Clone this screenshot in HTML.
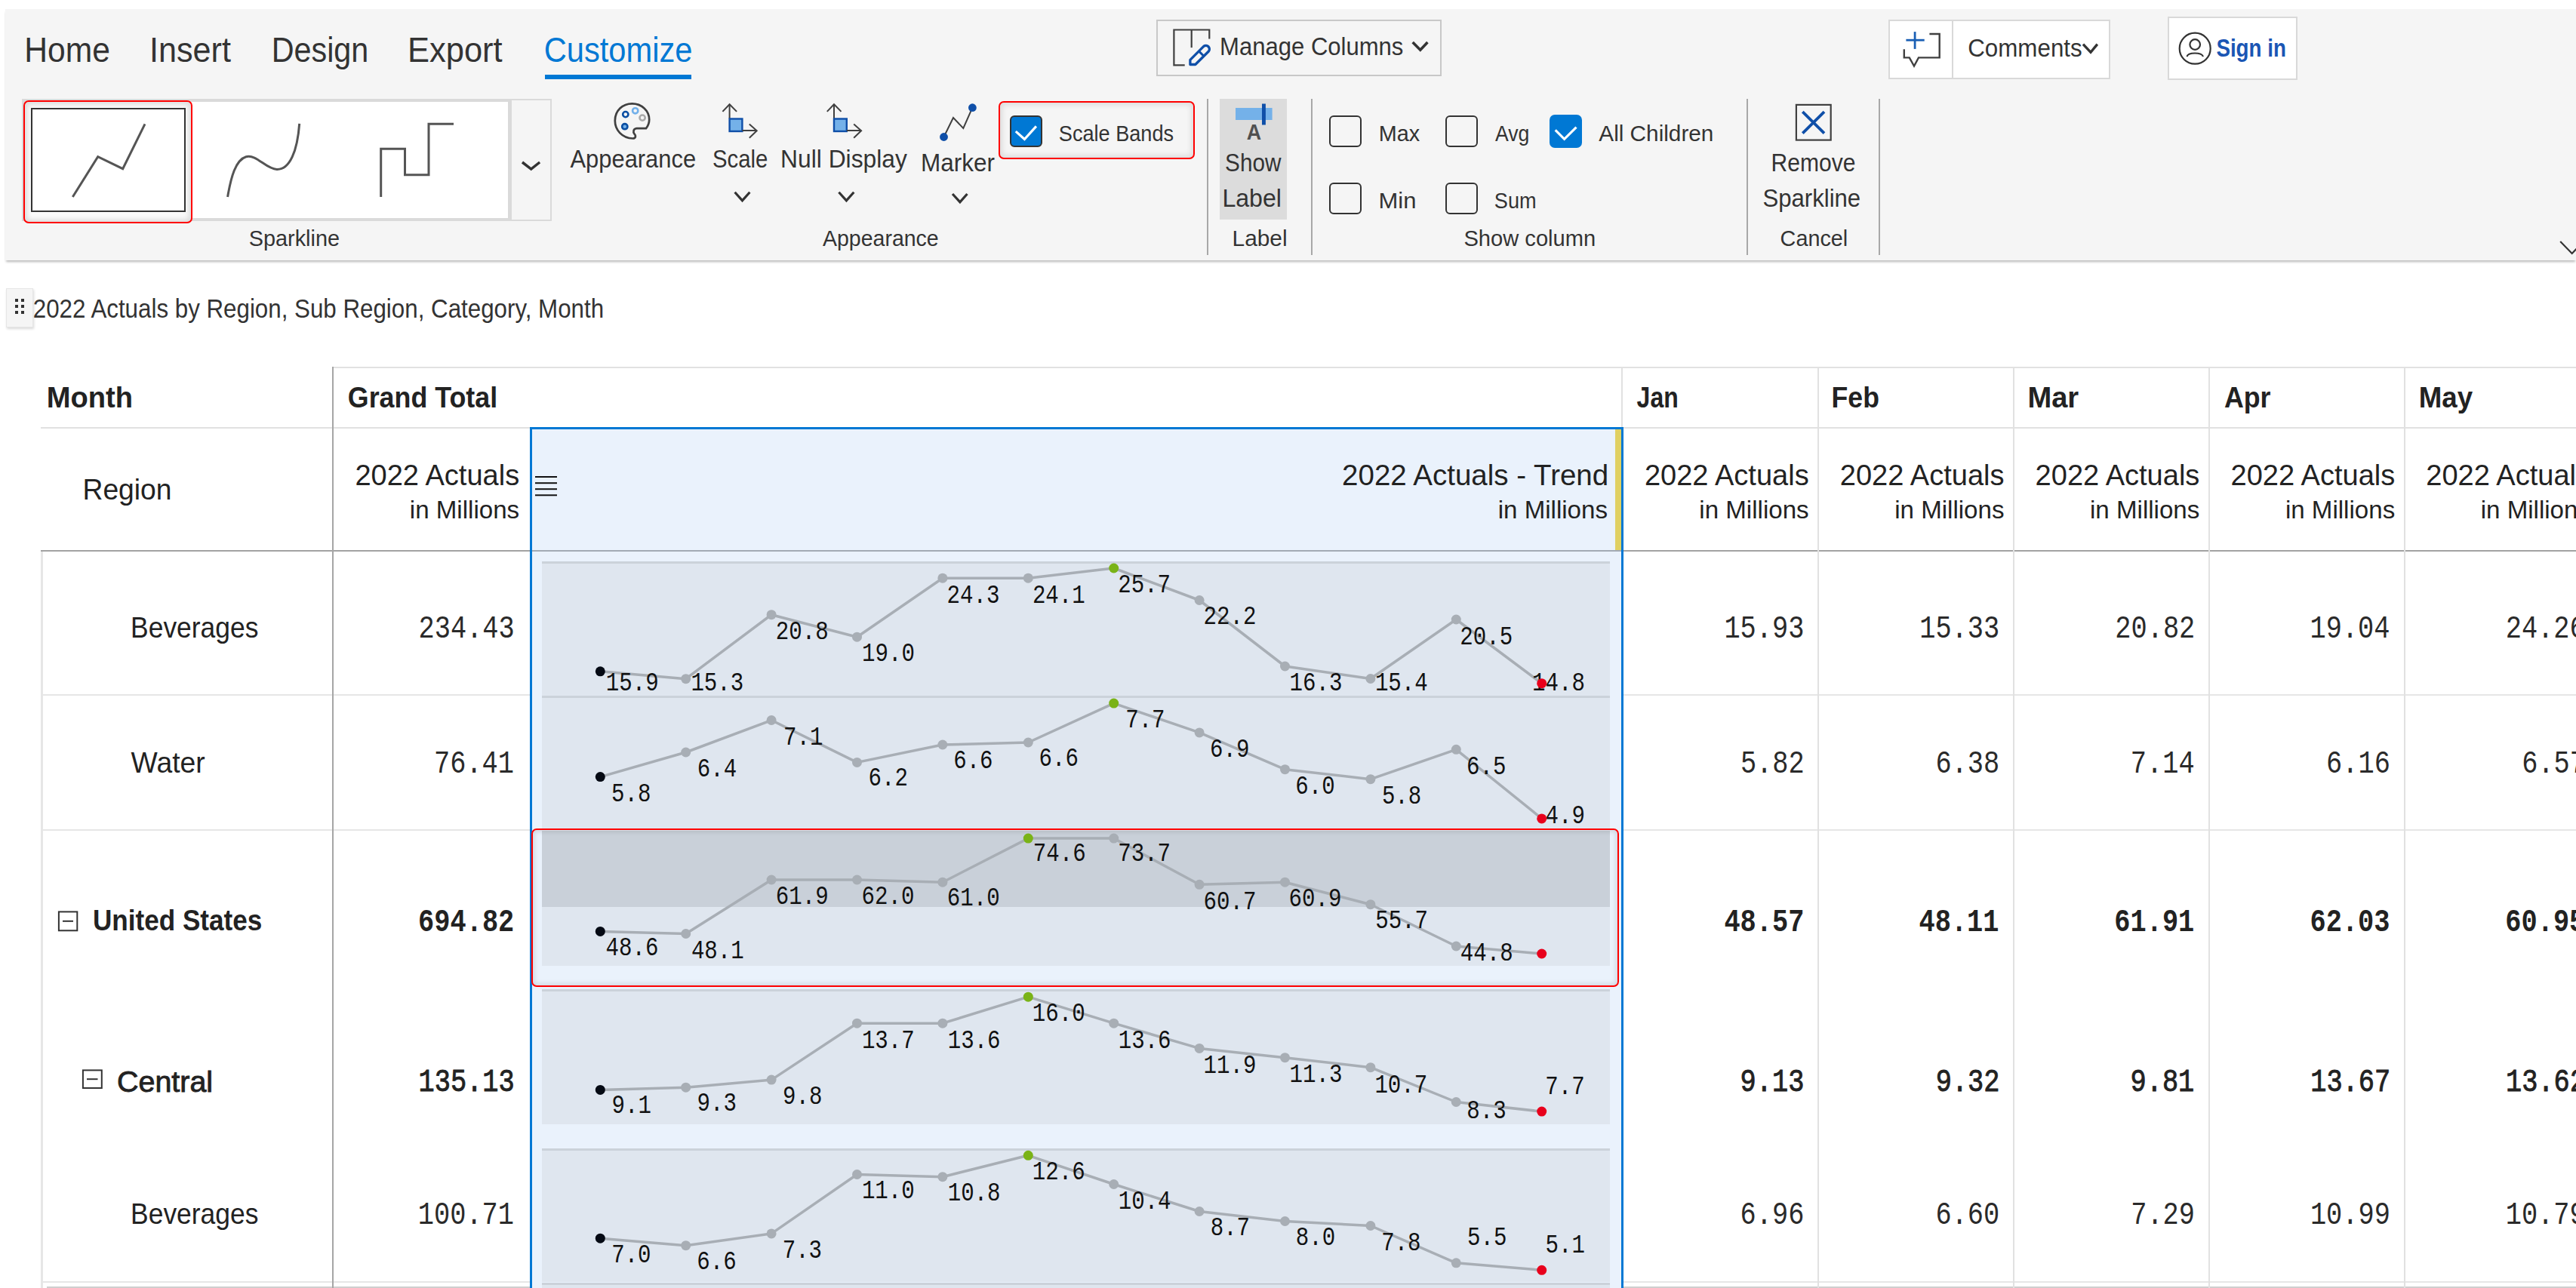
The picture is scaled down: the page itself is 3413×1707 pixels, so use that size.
<!DOCTYPE html>
<html><head><meta charset="utf-8">
<style>
html,body{margin:0;padding:0;background:#fff;width:3413px;height:1707px;overflow:hidden;position:relative;font-family:"Liberation Sans",sans-serif;}
.a{position:absolute;box-sizing:border-box;}
svg.ov{position:absolute;left:0;top:0;width:3413px;height:1707px;}
</style></head><body>
<!-- ribbon -->
<div class="a" style="left:7px;top:12px;width:3406px;height:333px;background:#f5f5f5;box-shadow:0 3px 3px -1px rgba(0,0,0,0.28);"></div>
<!-- customize underline -->
<div class="a" style="left:722px;top:99px;width:194px;height:6px;background:#0078d4;"></div>
<!-- manage columns box -->
<div class="a" style="left:1532px;top:26px;width:378px;height:75px;border:2px solid #c8c8c8;"></div>
<!-- comments box -->
<div class="a" style="left:2502px;top:26px;width:294px;height:79px;border:2px solid #d9d9d9;background:#fff;"></div>
<div class="a" style="left:2586px;top:26px;width:2px;height:79px;background:#d9d9d9;"></div>
<!-- sign in box -->
<div class="a" style="left:2872px;top:22px;width:172px;height:84px;border:2px solid #d9d9d9;background:#fff;"></div>
<!-- gallery -->
<div class="a" style="left:29px;top:131px;width:648px;height:162px;background:#dadada;"></div>
<div class="a" style="left:33px;top:135px;width:640px;height:154px;background:#fff;"></div>
<div class="a" style="left:676px;top:131px;width:55px;height:162px;background:#f5f5f5;border:2px solid #dadada;"></div>
<div class="a" style="left:31px;top:133px;width:224px;height:163px;border:2.5px solid #f00;border-radius:7px;box-shadow:inset 0 0 7px 3px rgba(0,0,0,0.13);background:#fafafa;"></div>
<div class="a" style="left:41px;top:143px;width:205px;height:138px;border:2.5px solid #333;background:#fff;"></div>
<!-- scale bands box -->
<div class="a" style="left:1323px;top:134px;width:260px;height:77px;border:2.5px solid #f00;border-radius:7px;box-shadow:inset 0 0 7px 3px rgba(0,0,0,0.10);"></div>
<div class="a" style="left:1338px;top:153px;width:43px;height:42px;border:2.5px solid #333;border-radius:6px;background:#0078d4;"></div>
<!-- show label bg -->
<div class="a" style="left:1616px;top:131px;width:89px;height:160px;background:#dcdcdc;"></div>
<!-- separators -->
<div class="a" style="left:1599px;top:131px;width:2px;height:207px;background:#a8a8a8;"></div>
<div class="a" style="left:1737px;top:131px;width:2px;height:207px;background:#a8a8a8;"></div>
<div class="a" style="left:2314px;top:131px;width:2px;height:207px;background:#a8a8a8;"></div>
<div class="a" style="left:2489px;top:131px;width:2px;height:207px;background:#a8a8a8;"></div>
<!-- checkboxes -->
<div class="a" style="left:1761px;top:153px;width:43px;height:42px;border:2.5px solid #333;border-radius:6px;"></div>
<div class="a" style="left:1915px;top:153px;width:43px;height:42px;border:2.5px solid #333;border-radius:6px;"></div>
<div class="a" style="left:2053px;top:152px;width:43px;height:44px;border-radius:7px;background:#0078d4;"></div>
<div class="a" style="left:1761px;top:242px;width:43px;height:42px;border:2.5px solid #333;border-radius:6px;"></div>
<div class="a" style="left:1915px;top:242px;width:43px;height:42px;border:2.5px solid #333;border-radius:6px;"></div>

<!-- drag handle -->
<div class="a" style="left:8px;top:382px;width:36px;height:52px;background:#f5f5f5;border:1px solid #e6e6e6;box-shadow:1px 2px 3px rgba(0,0,0,0.15);"></div>

<!-- table lines -->
<div class="a" style="left:440px;top:486px;width:2973px;height:2px;background:#e1e1e1;"></div>
<div class="a" style="left:54px;top:566px;width:3359px;height:2px;background:#e1e1e1;"></div>
<div class="a" style="left:54px;top:729px;width:3359px;height:2px;background:#a2a2a2;"></div>
<div class="a" style="left:54px;top:920px;width:3359px;height:2px;background:#e6e6e6;"></div>
<div class="a" style="left:54px;top:1099px;width:3359px;height:2px;background:#e6e6e6;"></div>
<div class="a" style="left:54px;top:1698px;width:3359px;height:2px;background:#e6e6e6;"></div>
<div class="a" style="left:62px;top:1705px;width:3351px;height:2px;background:#cfcfcf;"></div>
<div class="a" style="left:54px;top:731px;width:3px;height:976px;background:#e6e6e6;"></div>
<div class="a" style="left:440px;top:486px;width:2px;height:1221px;background:#a6a6a6;"></div>
<div class="a" style="left:2408px;top:486px;width:2px;height:1221px;background:#e1e1e1;"></div>
<div class="a" style="left:2667px;top:486px;width:2px;height:1221px;background:#e1e1e1;"></div>
<div class="a" style="left:2926px;top:486px;width:2px;height:1221px;background:#e1e1e1;"></div>
<div class="a" style="left:3185px;top:486px;width:2px;height:1221px;background:#e1e1e1;"></div>
<div class="a" style="left:2148px;top:486px;width:2px;height:81px;background:#e1e1e1;"></div>
<!-- trend column -->
<div class="a" style="left:702px;top:566px;width:1449px;height:1141px;background:#eaf2fc;border:3px solid #0078d4;border-bottom:none;"></div>
<div class="a" style="left:2140px;top:569px;width:8px;height:160px;background:#e0d062;"></div>
<div class="a" style="left:705px;top:729px;width:1443px;height:2px;background:#a2aab4;"></div>
<!-- bands -->
<div class="a" style="left:718px;top:744px;width:1415px;height:178px;background:#dfe6ef;border-top:3px solid #cbd2da;"></div>
<div class="a" style="left:718px;top:922px;width:1415px;height:177px;background:#dfe6ef;border-top:3px solid #cbd2da;"></div>
<div class="a" style="left:718px;top:1101px;width:1415px;height:179px;background:#dfe6ef;"></div>
<div class="a" style="left:718px;top:1101px;width:1415px;height:101px;background:#c9d0d9;"></div>
<div class="a" style="left:704px;top:1098px;width:1441px;height:210px;border:2.5px solid #f00;border-radius:7px;box-shadow:inset 0 0 6px 2px rgba(0,0,0,0.12);"></div>
<div class="a" style="left:718px;top:1311px;width:1415px;height:179px;background:#dfe6ef;border-top:3px solid #cbd2da;"></div>
<div class="a" style="left:718px;top:1522px;width:1415px;height:177px;background:#dfe6ef;border-top:3px solid #cbd2da;"></div>
<div class="a" style="left:718px;top:1700px;width:1415px;height:7px;background:#dfe6ef;border-top:3px solid #cbd2da;"></div>

<svg class="ov" width="3413" height="1707" viewBox="0 0 3413 1707">

<!-- gallery line icon -->
<polyline points="96.3,261 129.7,207.7 162.7,223.7 192,164.3" fill="none" stroke="#555" stroke-width="3"/>
<path d="M301.6,260.9 C306,235 312,212 326,207.7 C340,204 352,224 366.8,224.4 C384,225 394,200 396.7,163.8" fill="none" stroke="#555" stroke-width="3"/>
<polyline points="504.7,260.9 504.7,197.2 536.5,197.2 536.5,231.8 568,231.8 568,164.2 601,164.2" fill="none" stroke="#555" stroke-width="3"/>
<polyline points="692,215 703.7,224.1 715.1,215" fill="none" stroke="#333" stroke-width="3.5"/>
<!-- palette -->
<path d="M856,170.1 L843.5,170.1 C839,170.5 838.5,175 840.5,177.5 C843,180 842.5,183.5 838.5,183.5 C824,183 814.8,172 814.8,160 C814.8,146.5 825,137.3 837.5,137.3 C850,137.3 860.2,146.5 860.2,158.5 C860.2,163 858.5,167 856,170.1 Z" fill="none" stroke="#404040" stroke-width="2.7"/>
<circle cx="828.8" cy="151.6" r="3.6" fill="none" stroke="#0b4ea2" stroke-width="2.6"/>
<circle cx="841.7" cy="146.8" r="3.6" fill="none" stroke="#72b0ea" stroke-width="2.6"/>
<circle cx="851.1" cy="156.1" r="3.6" fill="none" stroke="#aaa" stroke-width="2.6"/>
<circle cx="827.8" cy="167.7" r="3.6" fill="#72b0ea" stroke="#0b4ea2" stroke-width="2.6"/>
<!-- scale icons -->
<g id="sc">
<polyline points="957.4,147.9 966.6,138.3 976.1,147.9" fill="none" stroke="#404040" stroke-width="2"/>
<line x1="966.6" y1="138.3" x2="966.6" y2="157" stroke="#404040" stroke-width="2"/>
<rect x="966.6" y="157.5" width="16.8" height="16.5" fill="#74b1e9" stroke="#0f4fa8" stroke-width="2.4"/>
<line x1="983.4" y1="173" x2="1002.7" y2="173" stroke="#404040" stroke-width="2"/>
<polyline points="992.8,164.5 1002.7,173.2 992.8,182.8" fill="none" stroke="#404040" stroke-width="2"/>
</g>
<use href="#sc" x="138.4" y="0"/>
<polyline points="973.6,254.8 983.5,265.9 993.4,254.8" fill="none" stroke="#333" stroke-width="3.2"/>
<polyline points="1111.4,254.8 1121.4,265.9 1131.3,254.8" fill="none" stroke="#333" stroke-width="3.2"/>
<polyline points="1262,257 1271.9,267.8 1281.5,257" fill="none" stroke="#333" stroke-width="3.2"/>
<!-- marker icon -->
<polyline points="1250.5,181.5 1263,156 1276.3,170 1288.4,142.7" fill="none" stroke="#404040" stroke-width="2"/>
<circle cx="1250.5" cy="181.5" r="5.4" fill="#0f4fa8"/>
<circle cx="1288.4" cy="142.7" r="5.4" fill="#0f4fa8"/>
<!-- scale bands check -->
<polyline points="1345.8,174.1 1357.4,184.5 1372.9,167.4" fill="none" stroke="#fff" stroke-width="3.2"/>
<polyline points="2060.7,172.4 2072.6,184.3 2088.5,168.7" fill="none" stroke="#fff" stroke-width="3.2"/>
<!-- show label icon -->
<rect x="1637" y="143" width="48.6" height="16" fill="#74b1e9"/>
<rect x="1672" y="137.5" width="4.9" height="28" fill="#0f4fa8"/>
<!-- remove icon -->
<rect x="2379.9" y="138.9" width="45.8" height="46.7" fill="none" stroke="#404040" stroke-width="2.2"/>
<line x1="2388.3" y1="148.2" x2="2417" y2="176.7" stroke="#0f4fa8" stroke-width="3.8"/>
<line x1="2417" y1="148.2" x2="2388.3" y2="176.7" stroke="#0f4fa8" stroke-width="3.8"/>
<!-- ribbon collapse chevron -->
<polyline points="3392.2,320 3407.7,336 3423,320" fill="none" stroke="#333" stroke-width="2.2"/>
<!-- manage columns icon -->
<polyline points="1602.3,51.5 1602.3,39.5 1555.4,39.5 1555.4,86.4 1569.7,86.4" fill="none" stroke="#404040" stroke-width="2.2"/>
<line x1="1578.7" y1="39.5" x2="1578.7" y2="63.1" stroke="#404040" stroke-width="2.2"/>
<path d="M1576.9,85.5 L1576.9,79.3 L1594.8,61.4 A4.7,4.7 0 0 1 1601.4,68 L1583.8,85.5 Z" fill="#f5f5f5" stroke="#0f4fa8" stroke-width="3.3" stroke-linejoin="round"/>
<line x1="1588.2" y1="67.6" x2="1594.4" y2="73.8" stroke="#0f4fa8" stroke-width="3"/>
<polyline points="1871.7,56.1 1881.8,66.2 1891.4,56.1" fill="none" stroke="#333" stroke-width="3.6"/>
<!-- comments icon -->
<line x1="2525.4" y1="53.2" x2="2549.7" y2="53.2" stroke="#1a5fb4" stroke-width="2.8"/>
<line x1="2537.1" y1="42.1" x2="2537.1" y2="64.9" stroke="#1a5fb4" stroke-width="2.8"/>
<polyline points="2556.4,45 2569.7,45 2569.7,76.4 2542,76.4 2536,87.5 2529.8,76.4 2522.8,76.4 2522.8,65.3" fill="none" stroke="#404040" stroke-width="2.4"/>
<polyline points="2760,58.7 2770,69.3 2778.8,58.7" fill="none" stroke="#333" stroke-width="3.4"/>
<!-- sign in icon -->
<circle cx="2908.2" cy="64.2" r="20.5" fill="none" stroke="#333" stroke-width="2.2"/>
<circle cx="2908.2" cy="59" r="6.8" fill="none" stroke="#333" stroke-width="2.2"/>
<path d="M2897.5,75 C2899,69 2917,69 2919,75" fill="none" stroke="#333" stroke-width="2.2"/>
<!-- drag handle dots -->
<g fill="#333">
<rect x="20" y="396" width="4" height="4"/><rect x="28" y="396" width="4" height="4"/>
<rect x="20" y="404" width="4" height="4"/><rect x="28" y="404" width="4" height="4"/>
<rect x="20" y="412" width="4" height="4"/><rect x="28" y="412" width="4" height="4"/>
</g>
<!-- hamburger -->
<g stroke="#111" stroke-width="2">
<line x1="709" y1="632" x2="738" y2="632"/><line x1="709" y1="640.2" x2="738" y2="640.2"/>
<line x1="709" y1="648.2" x2="738" y2="648.2"/><line x1="709" y1="656.3" x2="738" y2="656.3"/>
</g>
<!-- minus boxes -->
<rect x="77.9" y="1208.4" width="24.4" height="24.9" fill="none" stroke="#333" stroke-width="2"/>
<line x1="83" y1="1220.8" x2="97" y2="1220.8" stroke="#333" stroke-width="2"/>
<rect x="109.9" y="1418.4" width="24.9" height="23.6" fill="none" stroke="#333" stroke-width="2"/>
<line x1="115" y1="1430.2" x2="129.5" y2="1430.2" stroke="#333" stroke-width="2"/>

<polyline points="795.3,889.8 908.7,899.7 1022.1,814.7 1135.5,844.2 1248.9,766.2 1362.3,766.2 1475.7,753.0 1589.1,795.5 1702.5,883.0 1815.9,899.5 1929.3,821.0 2042.7,905.7" fill="none" stroke="#a8aeb5" stroke-width="3.5" stroke-linejoin="round"/>
<polyline points="795.3,1029.6 908.7,997.0 1022.1,954.5 1135.5,1010.4 1248.9,987.0 1362.3,984.0 1475.7,932.1 1589.1,970.9 1702.5,1019.7 1815.9,1032.7 1929.3,993.3 2042.7,1084.9" fill="none" stroke="#a8aeb5" stroke-width="3.5" stroke-linejoin="round"/>
<polyline points="795.3,1234.4 908.7,1237.5 1022.1,1166.0 1135.5,1166.0 1248.9,1169.2 1362.3,1111.1 1475.7,1111.1 1589.1,1172.3 1702.5,1169.2 1815.9,1198.7 1929.3,1254.0 2042.7,1264.0" fill="none" stroke="#a8aeb5" stroke-width="3.5" stroke-linejoin="round"/>
<polyline points="795.3,1444.4 908.7,1441.2 1022.1,1431.1 1135.5,1356.2 1248.9,1356.2 1362.3,1321.2 1475.7,1356.2 1589.1,1389.4 1702.5,1401.7 1815.9,1414.7 1929.3,1460.5 2042.7,1473.1" fill="none" stroke="#a8aeb5" stroke-width="3.5" stroke-linejoin="round"/>
<polyline points="795.3,1641.2 908.7,1650.7 1022.1,1634.9 1135.5,1556.5 1248.9,1559.7 1362.3,1531.3 1475.7,1569.5 1589.1,1605.5 1702.5,1618.5 1815.9,1624.5 1929.3,1673.8 2042.7,1683.3" fill="none" stroke="#a8aeb5" stroke-width="3.5" stroke-linejoin="round"/>
<text x="32.3" y="82.3" font-family="Liberation Sans" font-size="46.51" fill="#333" textLength="113.6" lengthAdjust="spacingAndGlyphs">Home</text>
<text x="198.0" y="82.3" font-family="Liberation Sans" font-size="46.51" fill="#333" textLength="107.9" lengthAdjust="spacingAndGlyphs">Insert</text>
<text x="359.7" y="82.3" font-family="Liberation Sans" font-size="46.51" fill="#333" textLength="128.6" lengthAdjust="spacingAndGlyphs">Design</text>
<text x="540.0" y="82.3" font-family="Liberation Sans" font-size="46.51" fill="#333" textLength="125.7" lengthAdjust="spacingAndGlyphs">Export</text>
<text x="720.7" y="82.3" font-family="Liberation Sans" font-size="46.51" fill="#0078d4" textLength="196.8" lengthAdjust="spacingAndGlyphs">Customize</text>
<text x="1616.1" y="73.0" font-family="Liberation Sans" font-size="32.41" fill="#333" textLength="243.3" lengthAdjust="spacingAndGlyphs">Manage Columns</text>
<text x="2607.2" y="74.6" font-family="Liberation Sans" font-size="32.41" fill="#333" textLength="151.5" lengthAdjust="spacingAndGlyphs">Comments</text>
<text x="2936.4" y="75.3" font-family="Liberation Sans" font-size="32.41" font-weight="700" fill="#1a56b4" textLength="92.5" lengthAdjust="spacingAndGlyphs">Sign in</text>
<text x="755.5" y="222.0" font-family="Liberation Sans" font-size="32.41" fill="#333" textLength="166.6" lengthAdjust="spacingAndGlyphs">Appearance</text>
<text x="944.0" y="221.6" font-family="Liberation Sans" font-size="32.41" fill="#333" textLength="73.4" lengthAdjust="spacingAndGlyphs">Scale</text>
<text x="1034.1" y="221.6" font-family="Liberation Sans" font-size="32.41" fill="#333" textLength="167.7" lengthAdjust="spacingAndGlyphs">Null Display</text>
<text x="1220.0" y="226.5" font-family="Liberation Sans" font-size="32.41" fill="#333" textLength="98.0" lengthAdjust="spacingAndGlyphs">Marker</text>
<text x="1402.8" y="187.0" font-family="Liberation Sans" font-size="28.78" fill="#333" textLength="152.3" lengthAdjust="spacingAndGlyphs">Scale Bands</text>
<text x="1623.1" y="226.5" font-family="Liberation Sans" font-size="32.41" fill="#333" textLength="74.3" lengthAdjust="spacingAndGlyphs">Show</text>
<text x="1619.4" y="274.0" font-family="Liberation Sans" font-size="32.41" fill="#333" textLength="78.6" lengthAdjust="spacingAndGlyphs">Label</text>
<text x="1826.7" y="187.3" font-family="Liberation Sans" font-size="28.78" fill="#333" textLength="54.4" lengthAdjust="spacingAndGlyphs">Max</text>
<text x="1980.9" y="187.3" font-family="Liberation Sans" font-size="28.78" fill="#333" textLength="45.4" lengthAdjust="spacingAndGlyphs">Avg</text>
<text x="2118.3" y="187.3" font-family="Liberation Sans" font-size="28.78" fill="#333" textLength="152.1" lengthAdjust="spacingAndGlyphs">All Children</text>
<text x="1826.5" y="276.1" font-family="Liberation Sans" font-size="28.78" fill="#333" textLength="50.0" lengthAdjust="spacingAndGlyphs">Min</text>
<text x="1979.8" y="276.1" font-family="Liberation Sans" font-size="28.78" fill="#333" textLength="55.8" lengthAdjust="spacingAndGlyphs">Sum</text>
<text x="2346.6" y="226.7" font-family="Liberation Sans" font-size="32.41" fill="#333" textLength="112.0" lengthAdjust="spacingAndGlyphs">Remove</text>
<text x="2335.4" y="273.8" font-family="Liberation Sans" font-size="32.41" fill="#333" textLength="129.8" lengthAdjust="spacingAndGlyphs">Sparkline</text>
<text x="329.8" y="326.0" font-family="Liberation Sans" font-size="29.36" fill="#333" textLength="120.2" lengthAdjust="spacingAndGlyphs">Sparkline</text>
<text x="1090.0" y="326.0" font-family="Liberation Sans" font-size="29.36" fill="#333" textLength="153.7" lengthAdjust="spacingAndGlyphs">Appearance</text>
<text x="1632.6" y="326.0" font-family="Liberation Sans" font-size="29.36" fill="#333" textLength="73.0" lengthAdjust="spacingAndGlyphs">Label</text>
<text x="1939.4" y="326.0" font-family="Liberation Sans" font-size="29.36" fill="#333" textLength="174.8" lengthAdjust="spacingAndGlyphs">Show column</text>
<text x="2358.6" y="326.0" font-family="Liberation Sans" font-size="29.36" fill="#333" textLength="89.6" lengthAdjust="spacingAndGlyphs">Cancel</text>
<text x="1651.7" y="184.5" font-family="Liberation Sans" font-size="30.09" font-weight="700" fill="#505050" textLength="19.4" lengthAdjust="spacingAndGlyphs">A</text>
<text x="43.8" y="421.4" font-family="Liberation Sans" font-size="34.59" fill="#333" textLength="756.3" lengthAdjust="spacingAndGlyphs">2022 Actuals by Region, Sub Region, Category, Month</text>
<text x="61.7" y="540.2" font-family="Liberation Sans" font-size="39.68" font-weight="700" fill="#222" textLength="114.3" lengthAdjust="spacingAndGlyphs">Month</text>
<text x="460.8" y="540.2" font-family="Liberation Sans" font-size="39.68" font-weight="700" fill="#222" textLength="198.3" lengthAdjust="spacingAndGlyphs">Grand Total</text>
<text x="2168.6" y="540.2" font-family="Liberation Sans" font-size="39.68" font-weight="700" fill="#222" textLength="55.1" lengthAdjust="spacingAndGlyphs">Jan</text>
<text x="2426.6" y="540.2" font-family="Liberation Sans" font-size="39.68" font-weight="700" fill="#222" textLength="63.3" lengthAdjust="spacingAndGlyphs">Feb</text>
<text x="2686.4" y="540.2" font-family="Liberation Sans" font-size="39.68" font-weight="700" fill="#222" textLength="67.8" lengthAdjust="spacingAndGlyphs">Mar</text>
<text x="2946.9" y="540.2" font-family="Liberation Sans" font-size="39.68" font-weight="700" fill="#222" textLength="61.6" lengthAdjust="spacingAndGlyphs">Apr</text>
<text x="3204.8" y="540.2" font-family="Liberation Sans" font-size="39.68" font-weight="700" fill="#222" textLength="71.4" lengthAdjust="spacingAndGlyphs">May</text>
<text x="109.5" y="661.5" font-family="Liberation Sans" font-size="39.24" fill="#222" textLength="118.0" lengthAdjust="spacingAndGlyphs">Region</text>
<text x="470.4" y="643.2" font-family="Liberation Sans" font-size="39.24" fill="#222" textLength="217.8" lengthAdjust="spacingAndGlyphs">2022 Actuals</text>
<text x="542.8" y="687.0" font-family="Liberation Sans" font-size="33.28" fill="#222" textLength="145.3" lengthAdjust="spacingAndGlyphs">in Millions</text>
<text x="1778.1" y="643.2" font-family="Liberation Sans" font-size="39.24" fill="#222" textLength="353.1" lengthAdjust="spacingAndGlyphs">2022 Actuals - Trend</text>
<text x="1984.7" y="687.0" font-family="Liberation Sans" font-size="33.28" fill="#222" textLength="145.3" lengthAdjust="spacingAndGlyphs">in Millions</text>
<text x="2178.9" y="643.2" font-family="Liberation Sans" font-size="39.24" fill="#222" textLength="217.8" lengthAdjust="spacingAndGlyphs">2022 Actuals</text>
<text x="2251.3" y="687.0" font-family="Liberation Sans" font-size="33.28" fill="#222" textLength="145.3" lengthAdjust="spacingAndGlyphs">in Millions</text>
<text x="2437.8" y="643.2" font-family="Liberation Sans" font-size="39.24" fill="#222" textLength="217.8" lengthAdjust="spacingAndGlyphs">2022 Actuals</text>
<text x="2510.2" y="687.0" font-family="Liberation Sans" font-size="33.28" fill="#222" textLength="145.3" lengthAdjust="spacingAndGlyphs">in Millions</text>
<text x="2696.6" y="643.2" font-family="Liberation Sans" font-size="39.24" fill="#222" textLength="217.8" lengthAdjust="spacingAndGlyphs">2022 Actuals</text>
<text x="2769.0" y="687.0" font-family="Liberation Sans" font-size="33.28" fill="#222" textLength="145.3" lengthAdjust="spacingAndGlyphs">in Millions</text>
<text x="2955.5" y="643.2" font-family="Liberation Sans" font-size="39.24" fill="#222" textLength="217.8" lengthAdjust="spacingAndGlyphs">2022 Actuals</text>
<text x="3027.9" y="687.0" font-family="Liberation Sans" font-size="33.28" fill="#222" textLength="145.3" lengthAdjust="spacingAndGlyphs">in Millions</text>
<text x="3214.3" y="643.2" font-family="Liberation Sans" font-size="39.24" fill="#222" textLength="217.8" lengthAdjust="spacingAndGlyphs">2022 Actuals</text>
<text x="3286.7" y="687.0" font-family="Liberation Sans" font-size="33.28" fill="#222" textLength="145.3" lengthAdjust="spacingAndGlyphs">in Millions</text>
<text x="173.1" y="845.0" font-family="Liberation Sans" font-size="39.24" fill="#222" textLength="169.3" lengthAdjust="spacingAndGlyphs">Beverages</text>
<text x="173.6" y="1024.0" font-family="Liberation Sans" font-size="39.24" fill="#222" textLength="98.1" lengthAdjust="spacingAndGlyphs">Water</text>
<text x="123.0" y="1233.0" font-family="Liberation Sans" font-size="39.24" font-weight="700" fill="#222" textLength="224.2" lengthAdjust="spacingAndGlyphs">United States</text>
<text x="155.1" y="1446.5" font-family="Liberation Sans" font-size="39.24" stroke="#222" stroke-width="0.9" fill="#222" textLength="127.0" lengthAdjust="spacingAndGlyphs">Central</text>
<text x="173.1" y="1622.4" font-family="Liberation Sans" font-size="39.24" fill="#222" textLength="169.3" lengthAdjust="spacingAndGlyphs">Beverages</text>
<text x="554.5" y="845.0" font-family="Liberation Mono" font-size="41.58" fill="#2a2a2a" textLength="127.2" lengthAdjust="spacingAndGlyphs">234.43</text>
<text x="2284.4" y="845.0" font-family="Liberation Mono" font-size="41.58" fill="#2a2a2a" textLength="106.0" lengthAdjust="spacingAndGlyphs">15.93</text>
<text x="2543.2" y="845.0" font-family="Liberation Mono" font-size="41.58" fill="#2a2a2a" textLength="106.0" lengthAdjust="spacingAndGlyphs">15.33</text>
<text x="2802.3" y="845.0" font-family="Liberation Mono" font-size="41.58" fill="#2a2a2a" textLength="106.0" lengthAdjust="spacingAndGlyphs">20.82</text>
<text x="3060.5" y="845.0" font-family="Liberation Mono" font-size="41.58" fill="#2a2a2a" textLength="106.0" lengthAdjust="spacingAndGlyphs">19.04</text>
<text x="3319.7" y="845.0" font-family="Liberation Mono" font-size="41.58" fill="#2a2a2a" textLength="106.0" lengthAdjust="spacingAndGlyphs">24.26</text>
<text x="575.0" y="1024.0" font-family="Liberation Mono" font-size="41.58" fill="#2a2a2a" textLength="106.0" lengthAdjust="spacingAndGlyphs">76.41</text>
<text x="2305.9" y="1024.0" font-family="Liberation Mono" font-size="41.58" fill="#2a2a2a" textLength="84.8" lengthAdjust="spacingAndGlyphs">5.82</text>
<text x="2564.4" y="1024.0" font-family="Liberation Mono" font-size="41.58" fill="#2a2a2a" textLength="84.8" lengthAdjust="spacingAndGlyphs">6.38</text>
<text x="2822.8" y="1024.0" font-family="Liberation Mono" font-size="41.58" fill="#2a2a2a" textLength="84.8" lengthAdjust="spacingAndGlyphs">7.14</text>
<text x="3082.1" y="1024.0" font-family="Liberation Mono" font-size="41.58" fill="#2a2a2a" textLength="84.8" lengthAdjust="spacingAndGlyphs">6.16</text>
<text x="3341.2" y="1024.0" font-family="Liberation Mono" font-size="41.58" fill="#2a2a2a" textLength="84.8" lengthAdjust="spacingAndGlyphs">6.57</text>
<text x="554.1" y="1233.5" font-family="Liberation Mono" font-size="41.58" font-weight="700" fill="#222" textLength="127.2" lengthAdjust="spacingAndGlyphs">694.82</text>
<text x="2284.4" y="1233.5" font-family="Liberation Mono" font-size="41.58" font-weight="700" fill="#222" textLength="106.0" lengthAdjust="spacingAndGlyphs">48.57</text>
<text x="2542.5" y="1233.5" font-family="Liberation Mono" font-size="41.58" font-weight="700" fill="#222" textLength="106.0" lengthAdjust="spacingAndGlyphs">48.11</text>
<text x="2801.3" y="1233.5" font-family="Liberation Mono" font-size="41.58" font-weight="700" fill="#222" textLength="106.0" lengthAdjust="spacingAndGlyphs">61.91</text>
<text x="3060.5" y="1233.5" font-family="Liberation Mono" font-size="41.58" font-weight="700" fill="#222" textLength="106.0" lengthAdjust="spacingAndGlyphs">62.03</text>
<text x="3319.3" y="1233.5" font-family="Liberation Mono" font-size="41.58" font-weight="700" fill="#222" textLength="106.0" lengthAdjust="spacingAndGlyphs">60.95</text>
<text x="554.5" y="1446.0" font-family="Liberation Mono" font-size="41.58" stroke="#222" stroke-width="0.9" fill="#222" textLength="127.2" lengthAdjust="spacingAndGlyphs">135.13</text>
<text x="2305.6" y="1446.0" font-family="Liberation Mono" font-size="41.58" stroke="#222" stroke-width="0.9" fill="#222" textLength="84.8" lengthAdjust="spacingAndGlyphs">9.13</text>
<text x="2564.7" y="1446.0" font-family="Liberation Mono" font-size="41.58" stroke="#222" stroke-width="0.9" fill="#222" textLength="84.8" lengthAdjust="spacingAndGlyphs">9.32</text>
<text x="2822.5" y="1446.0" font-family="Liberation Mono" font-size="41.58" stroke="#222" stroke-width="0.9" fill="#222" textLength="84.8" lengthAdjust="spacingAndGlyphs">9.81</text>
<text x="3061.2" y="1446.0" font-family="Liberation Mono" font-size="41.58" stroke="#222" stroke-width="0.9" fill="#222" textLength="106.0" lengthAdjust="spacingAndGlyphs">13.67</text>
<text x="3320.0" y="1446.0" font-family="Liberation Mono" font-size="41.58" stroke="#222" stroke-width="0.9" fill="#222" textLength="106.0" lengthAdjust="spacingAndGlyphs">13.62</text>
<text x="553.8" y="1622.0" font-family="Liberation Mono" font-size="41.58" fill="#2a2a2a" textLength="127.2" lengthAdjust="spacingAndGlyphs">100.71</text>
<text x="2305.6" y="1622.0" font-family="Liberation Mono" font-size="41.58" fill="#2a2a2a" textLength="84.8" lengthAdjust="spacingAndGlyphs">6.96</text>
<text x="2564.4" y="1622.0" font-family="Liberation Mono" font-size="41.58" fill="#2a2a2a" textLength="84.8" lengthAdjust="spacingAndGlyphs">6.60</text>
<text x="2823.2" y="1622.0" font-family="Liberation Mono" font-size="41.58" fill="#2a2a2a" textLength="84.8" lengthAdjust="spacingAndGlyphs">7.29</text>
<text x="3060.9" y="1622.0" font-family="Liberation Mono" font-size="41.58" fill="#2a2a2a" textLength="106.0" lengthAdjust="spacingAndGlyphs">10.99</text>
<text x="3319.7" y="1622.0" font-family="Liberation Mono" font-size="41.58" fill="#2a2a2a" textLength="106.0" lengthAdjust="spacingAndGlyphs">10.79</text>
<text x="802.8" y="915.0" font-family="Liberation Mono" font-size="34.45" fill="#111" textLength="69.9" lengthAdjust="spacingAndGlyphs">15.9</text>
<text x="915.4" y="915.0" font-family="Liberation Mono" font-size="34.45" fill="#111" textLength="69.9" lengthAdjust="spacingAndGlyphs">15.3</text>
<text x="1027.8" y="847.3" font-family="Liberation Mono" font-size="34.45" fill="#111" textLength="69.9" lengthAdjust="spacingAndGlyphs">20.8</text>
<text x="1142.0" y="876.2" font-family="Liberation Mono" font-size="34.45" fill="#111" textLength="69.9" lengthAdjust="spacingAndGlyphs">19.0</text>
<text x="1254.5" y="798.6" font-family="Liberation Mono" font-size="34.45" fill="#111" textLength="69.9" lengthAdjust="spacingAndGlyphs">24.3</text>
<text x="1367.9" y="798.6" font-family="Liberation Mono" font-size="34.45" fill="#111" textLength="69.9" lengthAdjust="spacingAndGlyphs">24.1</text>
<text x="1481.2" y="785.2" font-family="Liberation Mono" font-size="34.45" fill="#111" textLength="69.9" lengthAdjust="spacingAndGlyphs">25.7</text>
<text x="1594.6" y="827.1" font-family="Liberation Mono" font-size="34.45" fill="#111" textLength="69.9" lengthAdjust="spacingAndGlyphs">22.2</text>
<text x="1708.6" y="915.0" font-family="Liberation Mono" font-size="34.45" fill="#111" textLength="69.9" lengthAdjust="spacingAndGlyphs">16.3</text>
<text x="1821.9" y="915.0" font-family="Liberation Mono" font-size="34.45" fill="#111" textLength="69.9" lengthAdjust="spacingAndGlyphs">15.4</text>
<text x="1934.3" y="854.2" font-family="Liberation Mono" font-size="34.45" fill="#111" textLength="69.9" lengthAdjust="spacingAndGlyphs">20.5</text>
<text x="2030.0" y="915.0" font-family="Liberation Mono" font-size="34.45" fill="#111" textLength="69.9" lengthAdjust="spacingAndGlyphs">14.8</text>
<text x="810.1" y="1061.6" font-family="Liberation Mono" font-size="34.45" fill="#111" textLength="52.4" lengthAdjust="spacingAndGlyphs">5.8</text>
<text x="923.8" y="1029.0" font-family="Liberation Mono" font-size="34.45" fill="#111" textLength="52.4" lengthAdjust="spacingAndGlyphs">6.4</text>
<text x="1038.0" y="986.5" font-family="Liberation Mono" font-size="34.45" fill="#111" textLength="52.4" lengthAdjust="spacingAndGlyphs">7.1</text>
<text x="1150.5" y="1041.4" font-family="Liberation Mono" font-size="34.45" fill="#111" textLength="52.4" lengthAdjust="spacingAndGlyphs">6.2</text>
<text x="1263.2" y="1018.0" font-family="Liberation Mono" font-size="34.45" fill="#111" textLength="52.4" lengthAdjust="spacingAndGlyphs">6.6</text>
<text x="1376.6" y="1015.0" font-family="Liberation Mono" font-size="34.45" fill="#111" textLength="52.4" lengthAdjust="spacingAndGlyphs">6.6</text>
<text x="1491.2" y="963.8" font-family="Liberation Mono" font-size="34.45" fill="#111" textLength="52.4" lengthAdjust="spacingAndGlyphs">7.7</text>
<text x="1603.0" y="1002.6" font-family="Liberation Mono" font-size="34.45" fill="#111" textLength="52.4" lengthAdjust="spacingAndGlyphs">6.9</text>
<text x="1716.3" y="1052.3" font-family="Liberation Mono" font-size="34.45" fill="#111" textLength="52.4" lengthAdjust="spacingAndGlyphs">6.0</text>
<text x="1830.9" y="1064.7" font-family="Liberation Mono" font-size="34.45" fill="#111" textLength="52.4" lengthAdjust="spacingAndGlyphs">5.8</text>
<text x="1943.0" y="1025.9" font-family="Liberation Mono" font-size="34.45" fill="#111" textLength="52.4" lengthAdjust="spacingAndGlyphs">6.5</text>
<text x="2047.5" y="1091.0" font-family="Liberation Mono" font-size="34.45" fill="#111" textLength="52.4" lengthAdjust="spacingAndGlyphs">4.9</text>
<text x="802.5" y="1266.4" font-family="Liberation Mono" font-size="34.45" fill="#111" textLength="69.9" lengthAdjust="spacingAndGlyphs">48.6</text>
<text x="915.9" y="1269.5" font-family="Liberation Mono" font-size="34.45" fill="#111" textLength="69.9" lengthAdjust="spacingAndGlyphs">48.1</text>
<text x="1027.8" y="1198.0" font-family="Liberation Mono" font-size="34.45" fill="#111" textLength="69.9" lengthAdjust="spacingAndGlyphs">61.9</text>
<text x="1141.5" y="1198.0" font-family="Liberation Mono" font-size="34.45" fill="#111" textLength="69.9" lengthAdjust="spacingAndGlyphs">62.0</text>
<text x="1254.8" y="1200.2" font-family="Liberation Mono" font-size="34.45" fill="#111" textLength="69.9" lengthAdjust="spacingAndGlyphs">61.0</text>
<text x="1368.8" y="1141.2" font-family="Liberation Mono" font-size="34.45" fill="#111" textLength="69.9" lengthAdjust="spacingAndGlyphs">74.6</text>
<text x="1481.2" y="1141.2" font-family="Liberation Mono" font-size="34.45" fill="#111" textLength="69.9" lengthAdjust="spacingAndGlyphs">73.7</text>
<text x="1594.6" y="1204.9" font-family="Liberation Mono" font-size="34.45" fill="#111" textLength="69.9" lengthAdjust="spacingAndGlyphs">60.7</text>
<text x="1707.6" y="1201.2" font-family="Liberation Mono" font-size="34.45" fill="#111" textLength="69.9" lengthAdjust="spacingAndGlyphs">60.9</text>
<text x="1822.2" y="1229.8" font-family="Liberation Mono" font-size="34.45" fill="#111" textLength="69.9" lengthAdjust="spacingAndGlyphs">55.7</text>
<text x="1934.8" y="1272.6" font-family="Liberation Mono" font-size="34.45" fill="#111" textLength="69.9" lengthAdjust="spacingAndGlyphs">44.8</text>
<text x="810.5" y="1475.4" font-family="Liberation Mono" font-size="34.45" fill="#111" textLength="52.4" lengthAdjust="spacingAndGlyphs">9.1</text>
<text x="923.6" y="1472.2" font-family="Liberation Mono" font-size="34.45" fill="#111" textLength="52.4" lengthAdjust="spacingAndGlyphs">9.3</text>
<text x="1037.0" y="1462.7" font-family="Liberation Mono" font-size="34.45" fill="#111" textLength="52.4" lengthAdjust="spacingAndGlyphs">9.8</text>
<text x="1141.9" y="1389.4" font-family="Liberation Mono" font-size="34.45" fill="#111" textLength="69.9" lengthAdjust="spacingAndGlyphs">13.7</text>
<text x="1255.7" y="1389.4" font-family="Liberation Mono" font-size="34.45" fill="#111" textLength="69.9" lengthAdjust="spacingAndGlyphs">13.6</text>
<text x="1367.8" y="1353.1" font-family="Liberation Mono" font-size="34.45" fill="#111" textLength="69.9" lengthAdjust="spacingAndGlyphs">16.0</text>
<text x="1481.7" y="1389.4" font-family="Liberation Mono" font-size="34.45" fill="#111" textLength="69.9" lengthAdjust="spacingAndGlyphs">13.6</text>
<text x="1594.5" y="1421.6" font-family="Liberation Mono" font-size="34.45" fill="#111" textLength="69.9" lengthAdjust="spacingAndGlyphs">11.9</text>
<text x="1708.6" y="1434.3" font-family="Liberation Mono" font-size="34.45" fill="#111" textLength="69.9" lengthAdjust="spacingAndGlyphs">11.3</text>
<text x="1821.4" y="1447.6" font-family="Liberation Mono" font-size="34.45" fill="#111" textLength="69.9" lengthAdjust="spacingAndGlyphs">10.7</text>
<text x="1943.3" y="1482.3" font-family="Liberation Mono" font-size="34.45" fill="#111" textLength="52.4" lengthAdjust="spacingAndGlyphs">8.3</text>
<text x="2047.3" y="1450.0" font-family="Liberation Mono" font-size="34.45" fill="#111" textLength="52.4" lengthAdjust="spacingAndGlyphs">7.7</text>
<text x="810.2" y="1672.8" font-family="Liberation Mono" font-size="34.45" fill="#111" textLength="52.4" lengthAdjust="spacingAndGlyphs">7.0</text>
<text x="923.3" y="1682.3" font-family="Liberation Mono" font-size="34.45" fill="#111" textLength="52.4" lengthAdjust="spacingAndGlyphs">6.6</text>
<text x="1036.7" y="1666.5" font-family="Liberation Mono" font-size="34.45" fill="#111" textLength="52.4" lengthAdjust="spacingAndGlyphs">7.3</text>
<text x="1141.9" y="1588.2" font-family="Liberation Mono" font-size="34.45" fill="#111" textLength="69.9" lengthAdjust="spacingAndGlyphs">11.0</text>
<text x="1255.7" y="1591.3" font-family="Liberation Mono" font-size="34.45" fill="#111" textLength="69.9" lengthAdjust="spacingAndGlyphs">10.8</text>
<text x="1367.8" y="1562.9" font-family="Liberation Mono" font-size="34.45" fill="#111" textLength="69.9" lengthAdjust="spacingAndGlyphs">12.6</text>
<text x="1481.7" y="1601.7" font-family="Liberation Mono" font-size="34.45" fill="#111" textLength="69.9" lengthAdjust="spacingAndGlyphs">10.4</text>
<text x="1603.7" y="1637.4" font-family="Liberation Mono" font-size="34.45" fill="#111" textLength="52.4" lengthAdjust="spacingAndGlyphs">8.7</text>
<text x="1716.8" y="1650.0" font-family="Liberation Mono" font-size="34.45" fill="#111" textLength="52.4" lengthAdjust="spacingAndGlyphs">8.0</text>
<text x="1830.2" y="1657.0" font-family="Liberation Mono" font-size="34.45" fill="#111" textLength="52.4" lengthAdjust="spacingAndGlyphs">7.8</text>
<text x="1944.0" y="1650.0" font-family="Liberation Mono" font-size="34.45" fill="#111" textLength="52.4" lengthAdjust="spacingAndGlyphs">5.5</text>
<text x="2047.6" y="1660.2" font-family="Liberation Mono" font-size="34.45" fill="#111" textLength="52.4" lengthAdjust="spacingAndGlyphs">5.1</text>
<circle cx="795.3" cy="889.8" r="6.5" fill="#050a14"/>
<circle cx="908.7" cy="899.7" r="6.5" fill="#a8aeb5"/>
<circle cx="1022.1" cy="814.7" r="6.5" fill="#a8aeb5"/>
<circle cx="1135.5" cy="844.2" r="6.5" fill="#a8aeb5"/>
<circle cx="1248.9" cy="766.2" r="6.5" fill="#a8aeb5"/>
<circle cx="1362.3" cy="766.2" r="6.5" fill="#a8aeb5"/>
<circle cx="1475.7" cy="753.0" r="6.5" fill="#7ab317"/>
<circle cx="1589.1" cy="795.5" r="6.5" fill="#a8aeb5"/>
<circle cx="1702.5" cy="883.0" r="6.5" fill="#a8aeb5"/>
<circle cx="1815.9" cy="899.5" r="6.5" fill="#a8aeb5"/>
<circle cx="1929.3" cy="821.0" r="6.5" fill="#a8aeb5"/>
<circle cx="2042.7" cy="905.7" r="6.5" fill="#e8001c"/>
<circle cx="795.3" cy="1029.6" r="6.5" fill="#050a14"/>
<circle cx="908.7" cy="997.0" r="6.5" fill="#a8aeb5"/>
<circle cx="1022.1" cy="954.5" r="6.5" fill="#a8aeb5"/>
<circle cx="1135.5" cy="1010.4" r="6.5" fill="#a8aeb5"/>
<circle cx="1248.9" cy="987.0" r="6.5" fill="#a8aeb5"/>
<circle cx="1362.3" cy="984.0" r="6.5" fill="#a8aeb5"/>
<circle cx="1475.7" cy="932.1" r="6.5" fill="#7ab317"/>
<circle cx="1589.1" cy="970.9" r="6.5" fill="#a8aeb5"/>
<circle cx="1702.5" cy="1019.7" r="6.5" fill="#a8aeb5"/>
<circle cx="1815.9" cy="1032.7" r="6.5" fill="#a8aeb5"/>
<circle cx="1929.3" cy="993.3" r="6.5" fill="#a8aeb5"/>
<circle cx="2042.7" cy="1084.9" r="6.5" fill="#e8001c"/>
<circle cx="795.3" cy="1234.4" r="6.5" fill="#050a14"/>
<circle cx="908.7" cy="1237.5" r="6.5" fill="#a8aeb5"/>
<circle cx="1022.1" cy="1166.0" r="6.5" fill="#a8aeb5"/>
<circle cx="1135.5" cy="1166.0" r="6.5" fill="#a8aeb5"/>
<circle cx="1248.9" cy="1169.2" r="6.5" fill="#a8aeb5"/>
<circle cx="1362.3" cy="1111.1" r="6.5" fill="#7ab317"/>
<circle cx="1475.7" cy="1111.1" r="6.5" fill="#a8aeb5"/>
<circle cx="1589.1" cy="1172.3" r="6.5" fill="#a8aeb5"/>
<circle cx="1702.5" cy="1169.2" r="6.5" fill="#a8aeb5"/>
<circle cx="1815.9" cy="1198.7" r="6.5" fill="#a8aeb5"/>
<circle cx="1929.3" cy="1254.0" r="6.5" fill="#a8aeb5"/>
<circle cx="2042.7" cy="1264.0" r="6.5" fill="#e8001c"/>
<circle cx="795.3" cy="1444.4" r="6.5" fill="#050a14"/>
<circle cx="908.7" cy="1441.2" r="6.5" fill="#a8aeb5"/>
<circle cx="1022.1" cy="1431.1" r="6.5" fill="#a8aeb5"/>
<circle cx="1135.5" cy="1356.2" r="6.5" fill="#a8aeb5"/>
<circle cx="1248.9" cy="1356.2" r="6.5" fill="#a8aeb5"/>
<circle cx="1362.3" cy="1321.2" r="6.5" fill="#7ab317"/>
<circle cx="1475.7" cy="1356.2" r="6.5" fill="#a8aeb5"/>
<circle cx="1589.1" cy="1389.4" r="6.5" fill="#a8aeb5"/>
<circle cx="1702.5" cy="1401.7" r="6.5" fill="#a8aeb5"/>
<circle cx="1815.9" cy="1414.7" r="6.5" fill="#a8aeb5"/>
<circle cx="1929.3" cy="1460.5" r="6.5" fill="#a8aeb5"/>
<circle cx="2042.7" cy="1473.1" r="6.5" fill="#e8001c"/>
<circle cx="795.3" cy="1641.2" r="6.5" fill="#050a14"/>
<circle cx="908.7" cy="1650.7" r="6.5" fill="#a8aeb5"/>
<circle cx="1022.1" cy="1634.9" r="6.5" fill="#a8aeb5"/>
<circle cx="1135.5" cy="1556.5" r="6.5" fill="#a8aeb5"/>
<circle cx="1248.9" cy="1559.7" r="6.5" fill="#a8aeb5"/>
<circle cx="1362.3" cy="1531.3" r="6.5" fill="#7ab317"/>
<circle cx="1475.7" cy="1569.5" r="6.5" fill="#a8aeb5"/>
<circle cx="1589.1" cy="1605.5" r="6.5" fill="#a8aeb5"/>
<circle cx="1702.5" cy="1618.5" r="6.5" fill="#a8aeb5"/>
<circle cx="1815.9" cy="1624.5" r="6.5" fill="#a8aeb5"/>
<circle cx="1929.3" cy="1673.8" r="6.5" fill="#a8aeb5"/>
<circle cx="2042.7" cy="1683.3" r="6.5" fill="#e8001c"/>
</svg>
</body></html>
